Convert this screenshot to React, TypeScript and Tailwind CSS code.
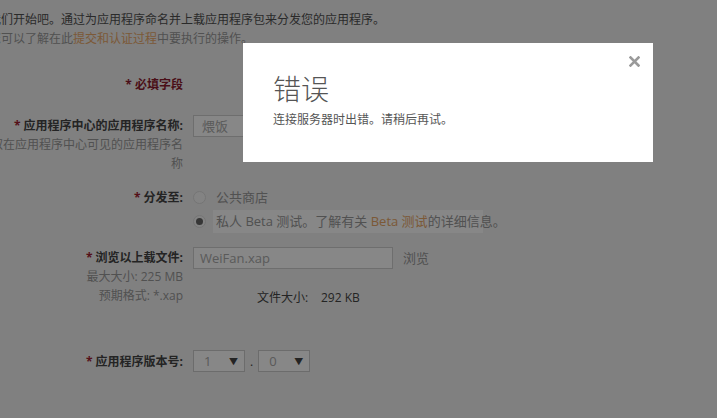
import React from 'react';

const Req = () => <span className="text-[#a02030]">* </span>;

const App: React.FC = () => {
  return (
    <div className="relative h-[418px] w-[717px] overflow-hidden bg-[#f2f2f2] font-['Open_Sans','Noto_Sans_CJK_SC',sans-serif] text-[12px] leading-[19px]">
      {/* Page underneath */}
      <div className="ml-[-11px] pt-[10px]">
        <p className="whitespace-nowrap text-[#505050]">我们开始吧。通过为应用程序命名并上载应用程序包来分发您的应用程序。</p>
        <p className="whitespace-nowrap text-[#999]">
          您可以了解在此<span className="text-[#eaa868]">提交和认证过程</span>中要执行的操作。
        </p>

        <div className="mt-[27px] flex">
          <div className="w-[194px] text-right font-bold text-[#8d1c2f]">* 必填字段</div>
        </div>

        {/* App name */}
        <div className="mt-[22px] flex gap-[10px]">
          <div className="w-[194px] text-right">
            <div className="whitespace-nowrap font-bold text-[#444]"><Req />应用程序中心的应用程序名称:</div>
            <div className="text-[#999]">取在应用程序中心可见的应用程序名称</div>
          </div>
          <div className="-mt-[1px] flex h-[22px] w-[200px] items-center border border-[#d0d0d0] bg-white px-[8px] text-[13px] text-[#aaa]">煨饭</div>
        </div>

        {/* Distribution */}
        <div className="mt-[12px] flex gap-[10px]">
          <div className="w-[194px] pt-[3px] text-right font-bold text-[#444]"><Req />分发至:</div>
          <div className="flex flex-col">
            <div className="flex h-[25px] items-center">
              <span className="h-[13px] w-[13px] rounded-full border border-[#ddd] bg-[#f8f8f8]" />
              <span className="ml-[10px] text-[13px] text-[#999]">公共商店</span>
            </div>
            <div className="flex h-[23px] items-center">
              <span className="flex h-[13px] w-[13px] shrink-0 items-center justify-center rounded-full border border-[#ddd] bg-[#f8f8f8]">
                <span className="h-[7px] w-[7px] rounded-full bg-[#666]" />
              </span>
              <div className="ml-[7px] h-[23px] w-[270px] shrink-0 whitespace-nowrap bg-white px-[3px] text-[13px] leading-[23px] text-[#999]">
                私人 Beta 测试。了解有关 <span className="text-[#eaa868]">Beta 测试</span>的详细信息。
              </div>
            </div>
          </div>
        </div>

        {/* File */}
        <div className="mt-[14px] flex gap-[10px]">
          <div className="w-[194px] pt-[1px] text-right">
            <div className="font-bold text-[#444]"><Req />浏览以上载文件:</div>
            <div className="text-[#999]">最大大小: 225 MB</div>
            <div className="text-[#999]">预期格式: *.xap</div>
          </div>
          <div className="flex flex-col">
            <div className="flex items-center">
              <div className="flex h-[22px] w-[200px] items-center border border-[#d0d0d0] bg-white px-[6px] text-[13px] text-[#aaa]">WeiFan.xap</div>
              <span className="ml-[10px] text-[13px] text-[#999]">浏览</span>
            </div>
            <div className="ml-[64px] mt-[19px] flex text-[#444]">
              <span className="w-[64px]">文件大小:</span>
              <span>292 KB</span>
            </div>
          </div>
        </div>

        {/* Version */}
        <div className="mt-[43px] flex items-center gap-[10px]">
          <div className="w-[194px] text-right font-bold text-[#444]"><Req />应用程序版本号:</div>
          <div className="flex items-center">
            <div className="flex h-[22px] w-[52px] items-center justify-between border border-[#ccc] bg-white pl-[10px] pr-[6px] text-[13px] text-[#aaa]">
              <span>1</span>
              <span className="text-[9px] text-[#444]">▼</span>
            </div>
            <span className="mx-[5px] text-[#444]">.</span>
            <div className="flex h-[22px] w-[52px] items-center justify-between border border-[#ccc] bg-white pl-[10px] pr-[6px] text-[13px] text-[#aaa]">
              <span>0</span>
              <span className="text-[9px] text-[#444]">▼</span>
            </div>
          </div>
        </div>
      </div>

      {/* Overlay */}
      <div className="absolute inset-0 bg-black/[0.47]" />

      {/* Modal */}
      <div className="absolute left-[243px] top-[43px] h-[119px] w-[410px] bg-white px-[30px] pt-[28px]">
        <button className="absolute right-[12px] top-[12px] p-[1px]">
          <svg width="11" height="11" viewBox="0 0 11 11">
            <path d="M1.5 1.5 L9.5 9.5 M9.5 1.5 L1.5 9.5" stroke="#9a9a9a" strokeWidth="2.6" strokeLinecap="square" />
          </svg>
        </button>
        <h1 className="text-[28px] font-light leading-[36px] text-[#555]">错误</h1>
        <p className="mt-[4px] text-[12px] leading-[18px] text-[#555]">连接服务器时出错。请稍后再试。</p>
      </div>
    </div>
  );
};

export default App;
